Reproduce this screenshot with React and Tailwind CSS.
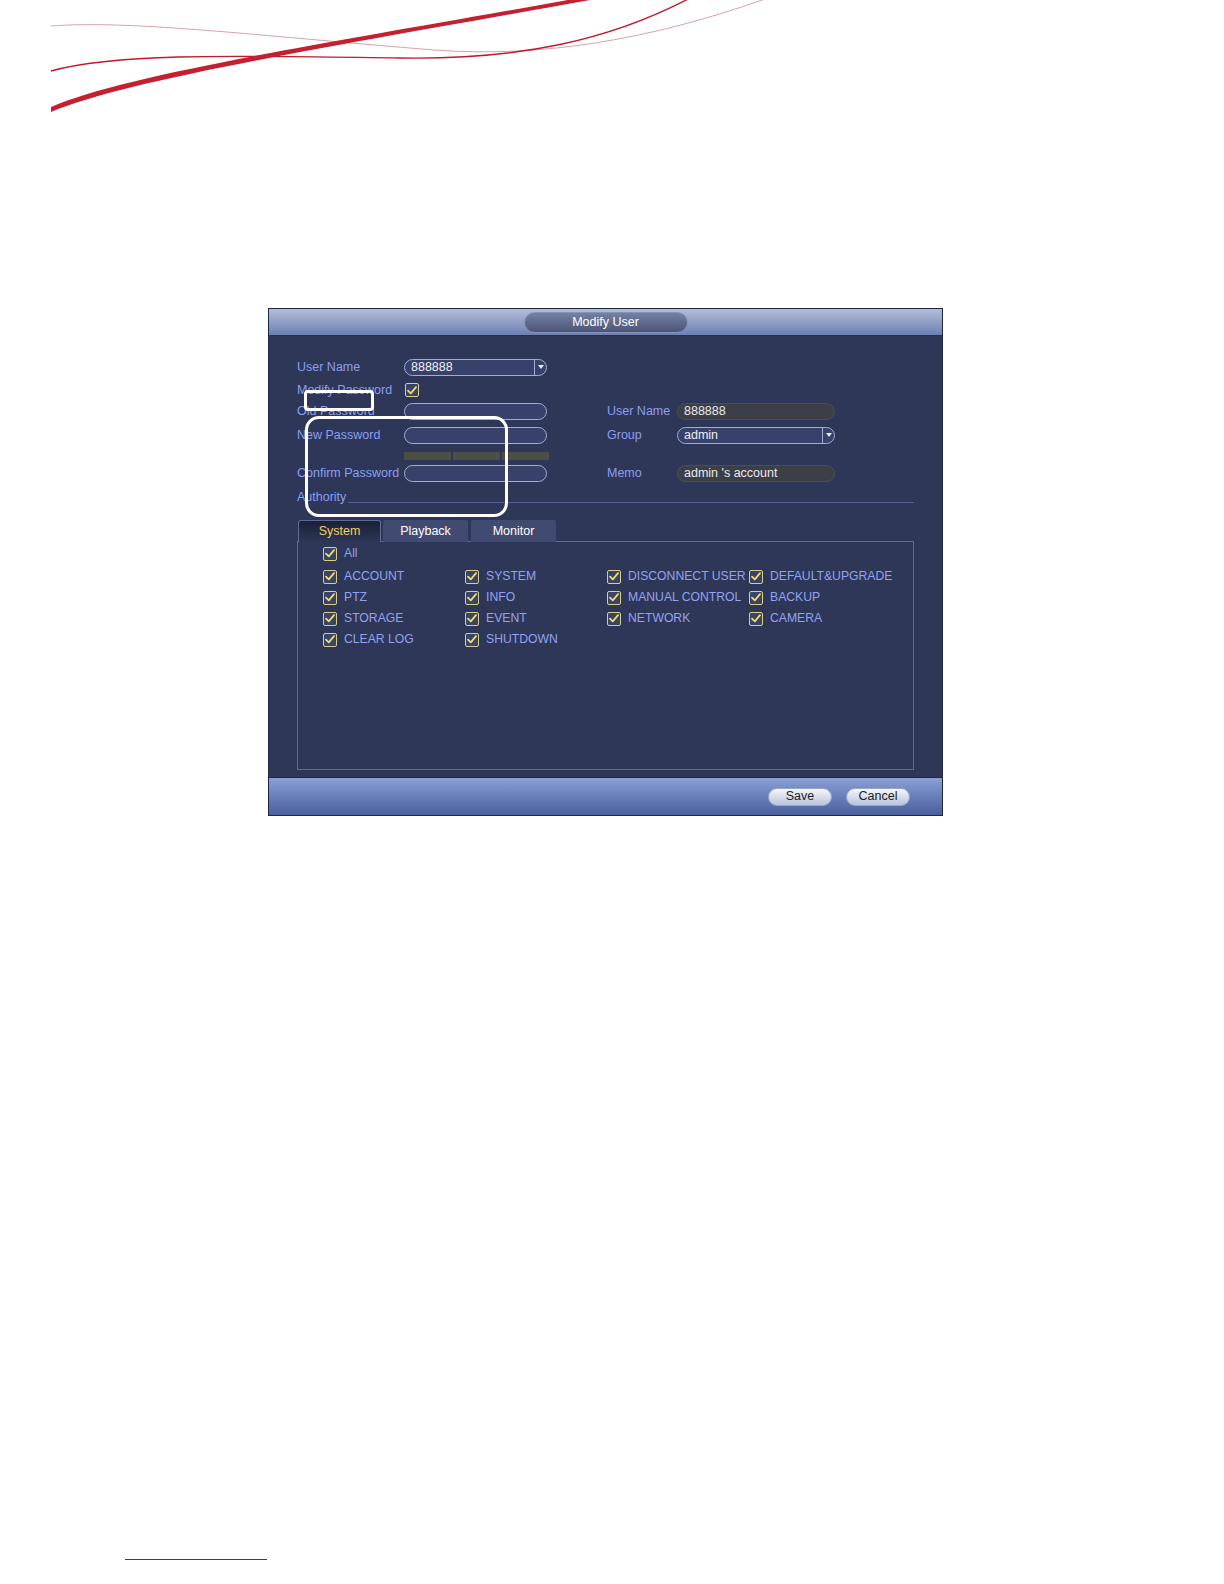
import React from "react";

const font = { fontFamily: '"Liberation Sans", Arial, sans-serif' };

const Check = () => (
  <span className="flex h-[14px] w-[14px] shrink-0 items-center justify-center rounded-[2px] border-[1.5px] border-[#d8ce88] bg-[#3a4466]">
    <svg width="10" height="9" viewBox="0 0 10 9">
      <path d="M1 4.6 L3.8 7.4 L9 1.2" fill="none" stroke="#ecdc72" strokeWidth="1.8" strokeLinecap="round" strokeLinejoin="round" />
    </svg>
  </span>
);

const Arrow = () => (
  <span className="flex h-full w-[12px] items-center justify-center border-l border-[#a3aed8]">
    <svg width="6" height="4" viewBox="0 0 6 4">
      <path d="M0 0 L6 0 L3 4 Z" fill="#e8ecf8" />
    </svg>
  </span>
);

const Field = ({ w, value, dark, dropdown }) => (
  <div
    className={
      "flex h-[17px] items-center overflow-hidden rounded-full border text-[12.5px] " +
      (dark
        ? "border-[#4b4e5a] bg-[#3d3f47] text-[#e6e8ee]"
        : "border-[#a3aed8] bg-[#37416a] text-[#eef0f8]")
    }
    style={{ width: w }}
  >
    <span className="flex-1 truncate pl-[6px] leading-none">{value}</span>
    {dropdown && <Arrow />}
  </div>
);

const Label = ({ children, w }) => (
  <span className="shrink-0 whitespace-nowrap text-[12.5px] text-[#8c9ef2]" style={{ width: w }}>
    {children}
  </span>
);

const perms = [
  ["ACCOUNT", "SYSTEM", "DISCONNECT USER", "DEFAULT&UPGRADE"],
  ["PTZ", "INFO", "MANUAL CONTROL", "BACKUP"],
  ["STORAGE", "EVENT", "NETWORK", "CAMERA"],
  ["CLEAR LOG", "SHUTDOWN", null, null],
];

const Perm = ({ text }) =>
  text ? (
    <div className="flex h-[21px] items-center gap-[7px]">
      <Check />
      <span className="whitespace-nowrap text-[12.2px] text-[#93a2f2]">{text}</span>
    </div>
  ) : (
    <div className="h-[21px]" />
  );

export default function App() {
  return (
    <div className="relative h-[1584px] w-[1224px] overflow-hidden bg-white" style={font}>
      {/* red swoosh */}
      <svg width="800" height="130" viewBox="0 0 800 130" className="block">
        <path d="M51 26 C 130 20, 250 35, 434 50 C 540 58, 650 40, 768 -2" fill="none" stroke="#d9a2a8" strokeWidth="1" />
        <path d="M51 71 C 120 52, 250 56, 400 58 C 520 60, 610 40, 690 -2" fill="none" stroke="#c21a2c" strokeWidth="1.4" />
        <path d="M51 107 C 130 73, 330 43, 590 -4 L 590 0 C 330 47, 130 79, 51 112 Z" fill="#c61f30" />
      </svg>

      {/* dialog */}
      <div className="ml-[268px] mt-[178px] w-[675px] border border-[#1f2640]">
        {/* title */}
        <div className="flex h-[27px] items-center justify-center border-b border-[#27304c] bg-gradient-to-b from-[#b3bedb] to-[#6d80b2]">
          <div className="flex h-[21px] w-[164px] items-center justify-center rounded-full border border-[#8893b6] bg-gradient-to-b from-[#7581a3] to-[#4a5578] text-[12.5px] text-white">
            Modify User
          </div>
        </div>

        {/* body */}
        <div className="h-[441px] bg-[#2e3757] pl-[28px] pr-[28px] pt-[19px]">
          <div className="flex h-[24px] items-center">
            <Label w={107}>User Name</Label>
            <Field w={143} value="888888" dropdown />
          </div>
          <div className="flex h-[22px] items-center">
            <Label w={107}>Modify Password</Label>
            <span className="ml-[1px]">
              <Check />
            </span>
          </div>
          <div className="flex h-[20px] items-center">
            <Label w={107}>Old Password</Label>
            <Field w={143} />
            <span className="w-[60px]" />
            <Label w={70}>User Name</Label>
            <Field w={158} value="888888" dark />
          </div>
          <div className="flex h-[28px] items-center">
            <Label w={107}>New Password</Label>
            <Field w={143} />
            <span className="w-[60px]" />
            <Label w={70}>Group</Label>
            <Field w={158} value="admin" dropdown />
          </div>
          <div className="ml-[107px] mt-[3px] flex h-[8px] w-[145px] gap-[2px]">
            <div className="flex-1 bg-[#4b4f44]" />
            <div className="flex-1 bg-[#4b4f44]" />
            <div className="flex-1 bg-[#4b4f44]" />
          </div>
          <div className="flex h-[26px] items-center">
            <Label w={107}>Confirm Password</Label>
            <Field w={143} />
            <span className="w-[60px]" />
            <Label w={70}>Memo</Label>
            <Field w={158} value="admin 's account" dark />
          </div>
          <div className="flex h-[22px] items-center">
            <span className="text-[12.5px] text-[#8c9ef2]">Authority</span>
            <div className="ml-[2px] mt-[10px] h-px flex-1 bg-[#56618c]" />
          </div>

          {/* tabs */}
          <div className="ml-[1px] mt-[12px] flex h-[22px] items-end text-[12.5px]">
            <div className="flex h-[22px] w-[83px] items-center justify-center rounded-t-[3px] border border-b-0 border-[#5f6a95] bg-gradient-to-b from-[#1a2036] to-[#2e3757] text-[#f2d35a]">
              System
            </div>
            <div className="ml-[2px] flex h-[22px] w-[85px] items-center justify-center rounded-t-[2px] bg-[#414b71] text-white">
              Playback
            </div>
            <div className="ml-[3px] flex h-[22px] w-[85px] items-center justify-center rounded-t-[2px] bg-[#414b71] text-white">
              Monitor
            </div>
          </div>
          <div className="-mt-px h-[229px] border border-[#5f6a95] pl-[25px] pt-px">
            <Perm text="All" />
            <div className="mt-[2px] grid grid-cols-[142px_142px_142px_142px]">
              {perms.flat().map((p, i) => (
                <Perm key={i} text={p} />
              ))}
            </div>
          </div>
        </div>

        {/* footer */}
        <div className="flex h-[38px] items-center justify-end gap-[14px] border-t border-[#1f2640] bg-gradient-to-b from-[#8aa0d6] to-[#4a5f9c] pr-[32px]">
          <button className="flex h-[18px] w-[64px] items-center justify-center rounded-full border border-[#9aa6c8] bg-gradient-to-b from-[#f6f7fb] to-[#b9c3dd] text-[12.5px] text-[#1c1c24]">
            Save
          </button>
          <button className="flex h-[18px] w-[64px] items-center justify-center rounded-full border border-[#9aa6c8] bg-gradient-to-b from-[#f6f7fb] to-[#b9c3dd] text-[12.5px] text-[#1c1c24]">
            Cancel
          </button>
        </div>
      </div>

      {/* annotation boxes */}
      <div className="absolute left-[304px] top-[390px] h-[21px] w-[70px] rounded-[4px] border-[3px] border-white" />
      <div className="absolute left-[305px] top-[416px] h-[101px] w-[203px] rounded-[14px] border-[3px] border-white" />

      {/* page footer rule */}
      <div className="ml-[125px] mt-[743px] h-px w-[142px] bg-[#2a3a8e]" />
    </div>
  );
}
